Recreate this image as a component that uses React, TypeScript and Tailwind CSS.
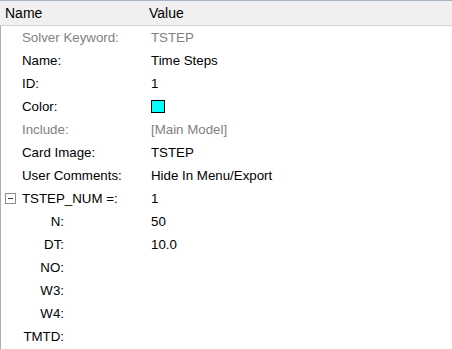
const rows: {
  label: string;
  value?: string;
  muted?: boolean;
  color?: boolean;
  group?: boolean;
  child?: boolean;
}[] = [
  { label: "Solver Keyword:", value: "TSTEP", muted: true },
  { label: "Name:", value: "Time Steps" },
  { label: "ID:", value: "1" },
  { label: "Color:", color: true },
  { label: "Include:", value: "[Main Model]", muted: true },
  { label: "Card Image:", value: "TSTEP" },
  { label: "User Comments:", value: "Hide In Menu/Export" },
  { label: "TSTEP_NUM =:", value: "1", group: true },
  { label: "N:", value: "50", child: true },
  { label: "DT:", value: "10.0", child: true },
  { label: "NO:", child: true },
  { label: "W3:", child: true },
  { label: "W4:", child: true },
  { label: "TMTD:", child: true },
];

const MinusBox = () => (
  <svg width="11" height="11" viewBox="0 0 11 11">
    <rect x="0.5" y="0.5" width="10" height="10" fill="#fff" stroke="#8c8c8c" />
    <line x1="3" y1="5.5" x2="8" y2="5.5" stroke="#333" />
  </svg>
);

const App = () => {
  return (
    <div
      className="w-[452px] h-[349px] bg-white overflow-hidden text-[13.3px] text-black"
      style={{ fontFamily: '"Liberation Sans", Arial, sans-serif' }}
    >
      <div className="flex items-center h-[26px] text-[14px] bg-[#f0f0f0] border-t border-[#a9b4c2] border-b border-b-[#d5d5d5]">
        <div className="w-[149px] pl-[5px]">Name</div>
        <div>Value</div>
      </div>
      <div className="border-l border-[#a7afba] h-full">
        {rows.map((r) => (
          <div key={r.label} className={`flex items-center h-[23px] ${r.muted ? "text-[#7f7f7f]" : ""}`}>
            <div className="w-[150px] flex items-center shrink-0">
              {r.group ? (
                <>
                  <span className="w-[21px] pl-[4px] flex items-center">
                    <MinusBox />
                  </span>
                  <span>{r.label}</span>
                </>
              ) : r.child ? (
                <span className="w-[63px] text-right">{r.label}</span>
              ) : (
                <span className="pl-[21px]">{r.label}</span>
              )}
            </div>
            <div>
              {r.color ? (
                <div className="w-[14px] h-[13px] bg-[#00ffff] border border-black" />
              ) : (
                r.value
              )}
            </div>
          </div>
        ))}
      </div>
    </div>
  );
};

export default App;
